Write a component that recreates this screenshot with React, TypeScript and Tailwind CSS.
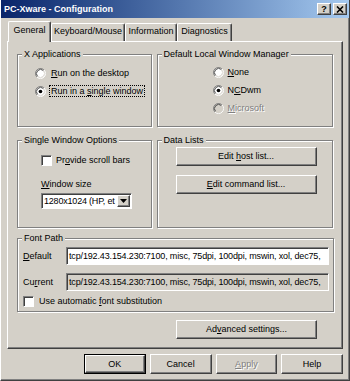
import React from "react";

const raised =
  "border border-t-white border-l-white border-r-[#404040] border-b-[#404040] shadow-[inset_-1px_-1px_0_#808080]";
const sunken =
  "border border-t-[#808080] border-l-[#808080] border-r-white border-b-white shadow-[inset_1px_1px_0_#404040]";

const U = ({ children }: { children: React.ReactNode }) => (
  <span className="underline underline-offset-[1px]">{children}</span>
);

const Radio = ({ checked = false, disabled = false }: { checked?: boolean; disabled?: boolean }) => (
  <svg width="11" height="11" viewBox="0 0 12 12" className="shrink-0">
    <circle cx="6" cy="6" r="5" fill={disabled ? "#d4d0c8" : "#fff"} />
    <path d="M2.11 9.89A5.5 5.5 0 0 1 9.89 2.11" fill="none" stroke="#808080" />
    <path d="M9.89 2.11A5.5 5.5 0 0 1 2.11 9.89" fill="none" stroke="#fff" />
    <path d="M2.82 9.18A4.5 4.5 0 0 1 9.18 2.82" fill="none" stroke="#404040" />
    <path d="M9.18 2.82A4.5 4.5 0 0 1 2.82 9.18" fill="none" stroke="#d4d0c8" />
    {checked && <circle cx="6" cy="6" r="2" fill="#000" />}
  </svg>
);

const Check = () => <span className={`block h-[11px] w-[11px] shrink-0 bg-white ${sunken}`} />;

type GroupProps = { title: string; className?: string; children: React.ReactNode };

const Group = ({ title, className = "", children }: GroupProps) => (
  <fieldset className={`min-w-0 border border-[#808080] shadow-[inset_1px_1px_0_#fff,1px_1px_0_#fff] ${className}`}>
    <legend className="ml-[4px] bg-[#d4d0c8] px-[2px] leading-[11px]">{title}</legend>
    {children}
  </fieldset>
);

const Tab = ({ label, active = false, w }: { label: string; active?: boolean; w: string }) =>
  active ? (
    <div
      className={`relative z-10 -mb-px flex h-[21px] ${w} items-start justify-center rounded-t-[2px] border-l border-t border-r border-l-white border-t-white border-r-[#404040] bg-[#d4d0c8] pt-[3px] shadow-[inset_-1px_0_0_#808080]`}
    >
      {label}
    </div>
  ) : (
    <div
      className={`flex h-[18px] ${w} items-start justify-center rounded-t-[2px] border-l border-t border-r border-l-white border-t-white border-r-[#404040] pt-[2px] shadow-[inset_-1px_0_0_#808080]`}
    >
      {label}
    </div>
  );

const Btn = ({ children, w, disabled = false, def = false }: { children: React.ReactNode; w: string; disabled?: boolean; def?: boolean }) =>
  def ? (
    <div className={`flex h-[20px] ${w} border border-black`}>
      <div className={`flex flex-1 items-center justify-center ${raised}`}>
        <span>{children}</span>
      </div>
    </div>
  ) : (
    <div
      className={`flex h-[20px] ${w} items-center justify-center ${raised} ${
        disabled ? "text-[#808080] [text-shadow:1px_1px_0_#fff]" : ""
      }`}
    >
      <span>{children}</span>
    </div>
  );

const fontPath = "tcp/192.43.154.230:7100, misc, 75dpi, 100dpi, mswin, xol, dec75,";

export default function App() {
  return (
    <div className="flex h-[381px] w-[350px] flex-col overflow-hidden border-x border-b border-l-white border-r-[#404040] border-b-[#404040] bg-[#d4d0c8] text-[9px] leading-[11px] text-black shadow-[inset_-1px_-1px_0_#808080] [font-family:'Liberation_Sans',Arial,sans-serif]">
      {/* title bar */}
      <div className="flex h-[18px] shrink-0 items-center justify-between bg-linear-to-r from-[#0a246a] to-[#a6caf0] pl-[3px]">
        <span className="text-[9px] font-bold text-white">PC-Xware - Configuration</span>
        <div className="mr-[2px] flex gap-[2px]">
          <span className={`flex h-[12px] w-[14px] items-center justify-center bg-[#d4d0c8] text-[9px] font-bold leading-none ${raised}`}>?</span>
          <span className={`flex h-[12px] w-[14px] items-center justify-center bg-[#d4d0c8] ${raised}`}>
            <svg width="8" height="7" viewBox="0 0 8 7">
              <path d="M1 0.5L7 6.5M7 0.5L1 6.5" stroke="#000" strokeWidth="1.6" />
            </svg>
          </span>
        </div>
      </div>

      <div className="flex flex-1 flex-col px-[6px]">
        {/* tabs */}
        <div className="mt-[3px] flex items-end pl-[1px]">
          <Tab label="General" active w="w-[43px]" />
          <Tab label="Keyboard/Mouse" w="w-[74px]" />
          <Tab label="Information" w="w-[52px]" />
          <Tab label="Diagnostics" w="w-[55px]" />
        </div>

        {/* panel */}
        <div className={`flex h-[308px] flex-col px-[9px] pt-[7px] ${raised}`}>
          <div className="flex gap-[5px]">
            <Group title="X Applications" className="h-[78px] w-[135px]">
              <div className="flex flex-col gap-[6px] pl-[17px] pt-[8px]">
                <div className="flex items-center gap-[4px]">
                  <Radio />
                  <span className="px-[1px]">
                    <U>R</U>un on the desktop
                  </span>
                </div>
                <div className="flex items-center gap-[3px]">
                  <Radio checked />
                  <span className="border border-dotted border-black px-[1px] leading-[10px]">
                    Run in a <U>s</U>ingle window
                  </span>
                </div>
              </div>
            </Group>
            <Group title="Default Local Window Manager" className="h-[78px] w-[177px]">
              <div className="flex flex-col gap-[7px] pl-[55px] pt-[7px]">
                <div className="flex items-center gap-[4px]">
                  <Radio />
                  <span>
                    <U>N</U>one
                  </span>
                </div>
                <div className="flex items-center gap-[4px]">
                  <Radio checked />
                  <span>
                    N<U>C</U>Dwm
                  </span>
                </div>
                <div className="flex items-center gap-[4px] text-[#808080]">
                  <Radio disabled />
                  <span className="[text-shadow:1px_1px_0_#fff]">
                    <U>M</U>icrosoft
                  </span>
                </div>
              </div>
            </Group>
          </div>

          <div className="mt-[8px] flex gap-[5px]">
            <Group title="Single Window Options" className="h-[93px] w-[135px]">
              <div className="flex flex-col pl-[23px] pt-[9px]">
                <div className="flex items-center gap-[4px]">
                  <Check />
                  <span>
                    Pr<U>o</U>vide scroll bars
                  </span>
                </div>
                <span className="mt-[13px]">
                  <U>W</U>indow size
                </span>
                <div className={`mt-[3px] flex h-[16px] w-[91px] bg-white ${sunken}`}>
                  <span className="min-w-0 flex-1 overflow-hidden whitespace-nowrap pl-[2px] pt-[1px] leading-[12px] tracking-[-0.2px]">1280x1024 (HP, et</span>
                  <span className={`my-[1px] mr-[1px] flex h-[12px] w-[13px] shrink-0 items-center justify-center bg-[#d4d0c8] ${raised}`}>
                    <svg width="7" height="4" viewBox="0 0 7 4">
                      <path d="M0 0h7L3.5 4z" fill="#000" />
                    </svg>
                  </span>
                </div>
              </div>
            </Group>
            <Group title="Data Lists" className="h-[93px] w-[177px]">
              <div className="flex flex-col gap-[9px] pl-[18px] pt-[1px]">
                <div className={`flex h-[19px] w-[141px] items-center justify-center ${raised}`}>
                  <span>
                    Edit <U>h</U>ost list...
                  </span>
                </div>
                <div className={`flex h-[19px] w-[141px] items-center justify-center ${raised}`}>
                  <span>
                    <U>E</U>dit command list...
                  </span>
                </div>
              </div>
            </Group>
          </div>

          <Group title="Font Path" className="mt-[5px] h-[79px] w-[317px]">
            <div className="flex flex-col pl-[5px] pr-[4px] pt-[3px]">
              <div className="flex items-center">
                <span className="w-[43px] shrink-0">
                  <U>D</U>efault
                </span>
                <div className={`h-[18px] min-w-0 flex-1 overflow-hidden whitespace-nowrap bg-white pl-[2px] pt-[3px] tracking-[-0.15px] ${sunken}`}>{fontPath}</div>
              </div>
              <div className="mt-[8px] flex items-center">
                <span className="w-[43px] shrink-0">
                  Cu<U>r</U>rent
                </span>
                <div className={`h-[18px] min-w-0 flex-1 overflow-hidden whitespace-nowrap bg-[#d4d0c8] pl-[2px] pt-[3px] tracking-[-0.15px] ${sunken}`}>{fontPath}</div>
              </div>
              <div className="mt-[5px] flex items-center gap-[5px]">
                <Check />
                <span>
                  Use automatic <U>f</U>ont substitution
                </span>
              </div>
            </div>
          </Group>

          <div className={`ml-[159px] mt-[8px] flex h-[19px] w-[141px] items-center justify-center ${raised}`}>
            <span>
              Ad<U>v</U>anced settings...
            </span>
          </div>
        </div>

        {/* dialog buttons */}
        <div className="ml-[77px] mt-[5px] flex gap-[4px]">
          <Btn w="w-[62px]" def>
            OK
          </Btn>
          <Btn w="w-[62px]">Cancel</Btn>
          <Btn w="w-[62px]" disabled>
            <U>A</U>pply
          </Btn>
          <Btn w="w-[62px]">Help</Btn>
        </div>
      </div>
    </div>
  );
}
